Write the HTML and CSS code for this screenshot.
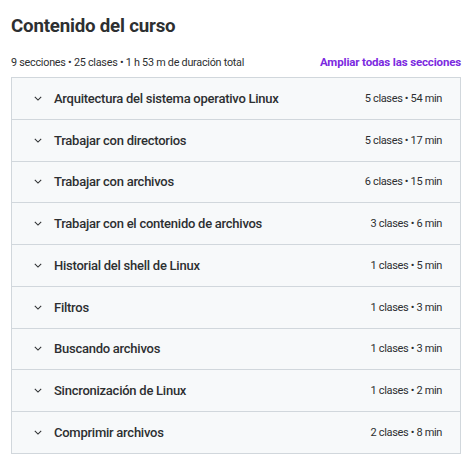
FILE: index.html
```html
<!DOCTYPE html>
<html lang="es">
<head>
<meta charset="utf-8">
<link rel="stylesheet" href="styles.css">
</head>
<body>
<div class="page">
  <h2 class="title">Contenido del curso</h2>
  <div class="meta">
    <span class="summary">9 secciones • 25 clases • 1 h 53 m de duración total</span>
    <span class="expand">Ampliar todas las secciones</span>
  </div>
  <div class="sections">
    <div class="row"><svg class="chev" viewBox="0 0 10 6"><path d="M1 1l4 4 4-4"/></svg><span class="name">Arquitectura del sistema operativo Linux</span><span class="info">5 clases • 54 min</span></div>
    <div class="row"><svg class="chev" viewBox="0 0 10 6"><path d="M1 1l4 4 4-4"/></svg><span class="name">Trabajar con directorios</span><span class="info">5 clases • 17 min</span></div>
    <div class="row"><svg class="chev" viewBox="0 0 10 6"><path d="M1 1l4 4 4-4"/></svg><span class="name">Trabajar con archivos</span><span class="info">6 clases • 15 min</span></div>
    <div class="row"><svg class="chev" viewBox="0 0 10 6"><path d="M1 1l4 4 4-4"/></svg><span class="name">Trabajar con el contenido de archivos</span><span class="info">3 clases • 6 min</span></div>
    <div class="row"><svg class="chev" viewBox="0 0 10 6"><path d="M1 1l4 4 4-4"/></svg><span class="name">Historial del shell de Linux</span><span class="info">1 clases • 5 min</span></div>
    <div class="row"><svg class="chev" viewBox="0 0 10 6"><path d="M1 1l4 4 4-4"/></svg><span class="name">Filtros</span><span class="info">1 clases • 3 min</span></div>
    <div class="row"><svg class="chev" viewBox="0 0 10 6"><path d="M1 1l4 4 4-4"/></svg><span class="name">Buscando archivos</span><span class="info">1 clases • 3 min</span></div>
    <div class="row"><svg class="chev" viewBox="0 0 10 6"><path d="M1 1l4 4 4-4"/></svg><span class="name">Sincronización de Linux</span><span class="info">1 clases • 2 min</span></div>
    <div class="row"><svg class="chev" viewBox="0 0 10 6"><path d="M1 1l4 4 4-4"/></svg><span class="name">Comprimir archivos</span><span class="info">2 clases • 8 min</span></div>
  </div>
</div>
</body>
</html>
```
FILE: styles.css
```css
* { box-sizing: border-box; }
body {
  margin: 0;
  background: #fff;
  font-family: Roboto, "Noto Sans", sans-serif;
  color: #2d2f31;
}
.page {
  width: 475px;
  padding: 13px 14px 0 11px;
}
.title {
  margin: 0;
  font-size: 18.7px;
  font-weight: 700;
  line-height: 27px;
  letter-spacing: -0.2px;
}
.meta {
  display: flex;
  justify-content: space-between;
  align-items: baseline;
  margin-top: 15px;
  height: 22px;
}
.summary {
  font-size: 10.8px;
  letter-spacing: -0.25px;
}
.expand {
  font-size: 11.5px;
  font-weight: 700;
  color: #7b2ae0;
  letter-spacing: -0.15px;
}
.sections {
  border: 1px solid #d1d7dc;
  background: #f7f9fa;
}
.row {
  display: flex;
  align-items: center;
  height: 41.75px;
  padding: 0 18px 0 22px;
  border-top: 1px solid #d1d7dc;
}
.row:first-child { border-top: none; height: 40.75px; }
.chev {
  width: 8px;
  height: 5px;
  fill: none;
  stroke: #2d2f31;
  stroke-width: 1.3;
  margin-right: 12px;
  flex: none;
}
.name {
  flex: 1;
  font-size: 13px;
  font-weight: 500;
  letter-spacing: -0.25px;
}
.info {
  font-size: 11px;
  letter-spacing: -0.35px;
}
```
